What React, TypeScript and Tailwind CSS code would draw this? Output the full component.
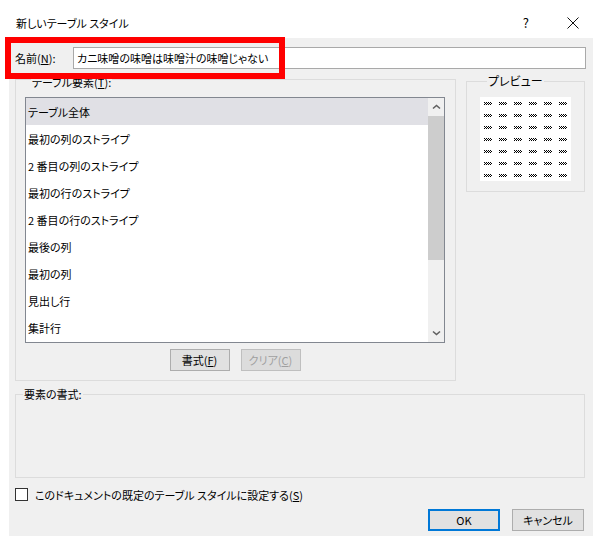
import React from "react";

const items = [
  "テーブル全体",
  "最初の列のストライプ",
  "2 番目の列のストライプ",
  "最初の行のストライプ",
  "2 番目の行のストライプ",
  "最後の列",
  "最初の列",
  "見出し行",
  "集計行",
];

const Dither = () => (
  <svg width="8" height="3" viewBox="0 0 8 3" className="block" shapeRendering="crispEdges">
    {[0, 1, 2].map((y) =>
      [0, 1, 2, 3].map((i) => (
        <rect key={`${y}-${i}`} x={i * 2 + (y % 2)} y={y} width="1" height="1" fill="#000" />
      ))
    )}
  </svg>
);

const Chevron = ({ down }: { down?: boolean }) => (
  <svg width="9" height="6" viewBox="0 0 9 6">
    <path
      d={down ? "M1 1.5 L4.5 4.5 L8 1.5" : "M1 4.5 L4.5 1.5 L8 4.5"}
      fill="none"
      stroke="#606060"
      strokeWidth="1.6"
    />
  </svg>
);

export default function App() {
  return (
    <div className="relative w-[593px] h-[536px] bg-white flex flex-col overflow-hidden font-['Noto_Sans_CJK_JP','Noto_Sans',sans-serif] text-[11px] leading-[16px] text-black [font-feature-settings:'palt']">
      {/* title bar */}
      <div className="h-[38px] shrink-0 flex items-center pt-[7px] pl-[16px]">
        <span>新しいテーブル スタイル</span>
        <span className="ml-auto text-[13px]">?</span>
        <svg width="12" height="12" viewBox="0 0 12 12" className="ml-[38px] mr-[14px]">
          <path d="M0.5 0.5 L11.5 11.5 M11.5 0.5 L0.5 11.5" stroke="#111" strokeWidth="1" />
        </svg>
      </div>

      {/* body */}
      <div className="flex-1 ml-[9px] bg-[#f0f0f0] flex flex-col pl-[6px] pr-[7px] pt-[9px]">
        <div className="flex items-center h-[22px]">
          <span className="w-[58px] shrink-0">
            名前(<span className="underline">N</span>):
          </span>
          <div className="flex-1 h-[22px] border border-[#a9a9a9] bg-white flex items-center px-[3px]">
            カニ味噌の味噌は味噌汁の味噌じゃない
          </div>
        </div>

        <div className="flex items-start mt-[2px]">
          <fieldset className="w-[441px] border border-[#dcdcdc] pl-[9px] pr-[10px] pb-[9px]">
            <legend className="ml-[6px] px-[1px] leading-[16px]">
              <span className="inline-block translate-y-[3px]">
                テーブル要素(<span className="underline">T</span>):
              </span>
            </legend>
            <div className="mt-[10px] h-[246px] border border-[#828790] bg-white flex">
              <div className="flex-1 flex flex-col">
                {items.map((t, i) => (
                  <div
                    key={t}
                    className={`h-[27px] shrink-0 flex items-center pl-[2px] ${i === 0 ? "bg-[#e0e0e5]" : ""}`}
                  >
                    {t}
                  </div>
                ))}
              </div>
              <div className="w-[16px] bg-[#f0f0f0] flex flex-col">
                <div className="h-[18px] flex items-center justify-center">
                  <Chevron />
                </div>
                <div className="h-[144px] bg-[#cdcdcd]" />
                <div className="flex-1" />
                <div className="h-[18px] flex items-center justify-center">
                  <Chevron down />
                </div>
              </div>
            </div>
            <div className="flex justify-center gap-[11px] mt-[6px]">
              <button className="w-[60px] h-[22px] border border-[#adadad] bg-[#e1e1e1] flex items-center justify-center">
                書式(<span className="underline">F</span>)
              </button>
              <button className="w-[60px] h-[22px] border border-[#bfbfbf] bg-[#dcdcdc] text-[#a0a0a0] flex items-center justify-center">
                クリア(<span className="underline">C</span>)
              </button>
            </div>
          </fieldset>

          <fieldset className="ml-[10px] mt-[2px] w-[119px] border border-[#dcdcdc] pl-[13px] pb-[10px]">
            <legend className="ml-[7px] px-[1px] leading-[16px] text-[12px]">プレビュー</legend>
            <div className="mt-[8px] w-[91px] h-[84px] bg-white pl-[4px] pt-[5px] grid grid-cols-[repeat(6,8px)] gap-x-[7px] gap-y-[9px] content-start">
              {Array.from({ length: 42 }).map((_, i) => (
                <Dither key={i} />
              ))}
            </div>
          </fieldset>
        </div>

        <fieldset className="mt-[5px] mr-[1px] border border-[#dcdcdc]">
          <legend className="ml-[7px] px-[1px] leading-[16px]">要素の書式:</legend>
          <div className="h-[75px]" />
        </fieldset>

        <div className="flex items-center mt-[10px] h-[13px]">
          <div className="w-[13px] h-[13px] border border-[#333] bg-white shrink-0" />
          <span className="ml-[7px]">
            このドキュメントの既定のテーブル スタイルに設定する(<span className="underline">S</span>)
          </span>
        </div>

        <div className="flex justify-end gap-[12px] mt-[8px] mr-[2px]">
          <button className="w-[72px] h-[22px] border-2 border-[#0078d7] bg-[#e1e1e1] flex items-center justify-center">
            OK
          </button>
          <button className="w-[72px] h-[22px] border border-[#adadad] bg-[#e1e1e1] flex items-center justify-center">
            キャンセル
          </button>
        </div>
      </div>

      {/* annotation */}
      <div className="absolute left-[5px] top-[37px] w-[280px] h-[42px] border-[6px] border-[#ff0000]" />
    </div>
  );
}
